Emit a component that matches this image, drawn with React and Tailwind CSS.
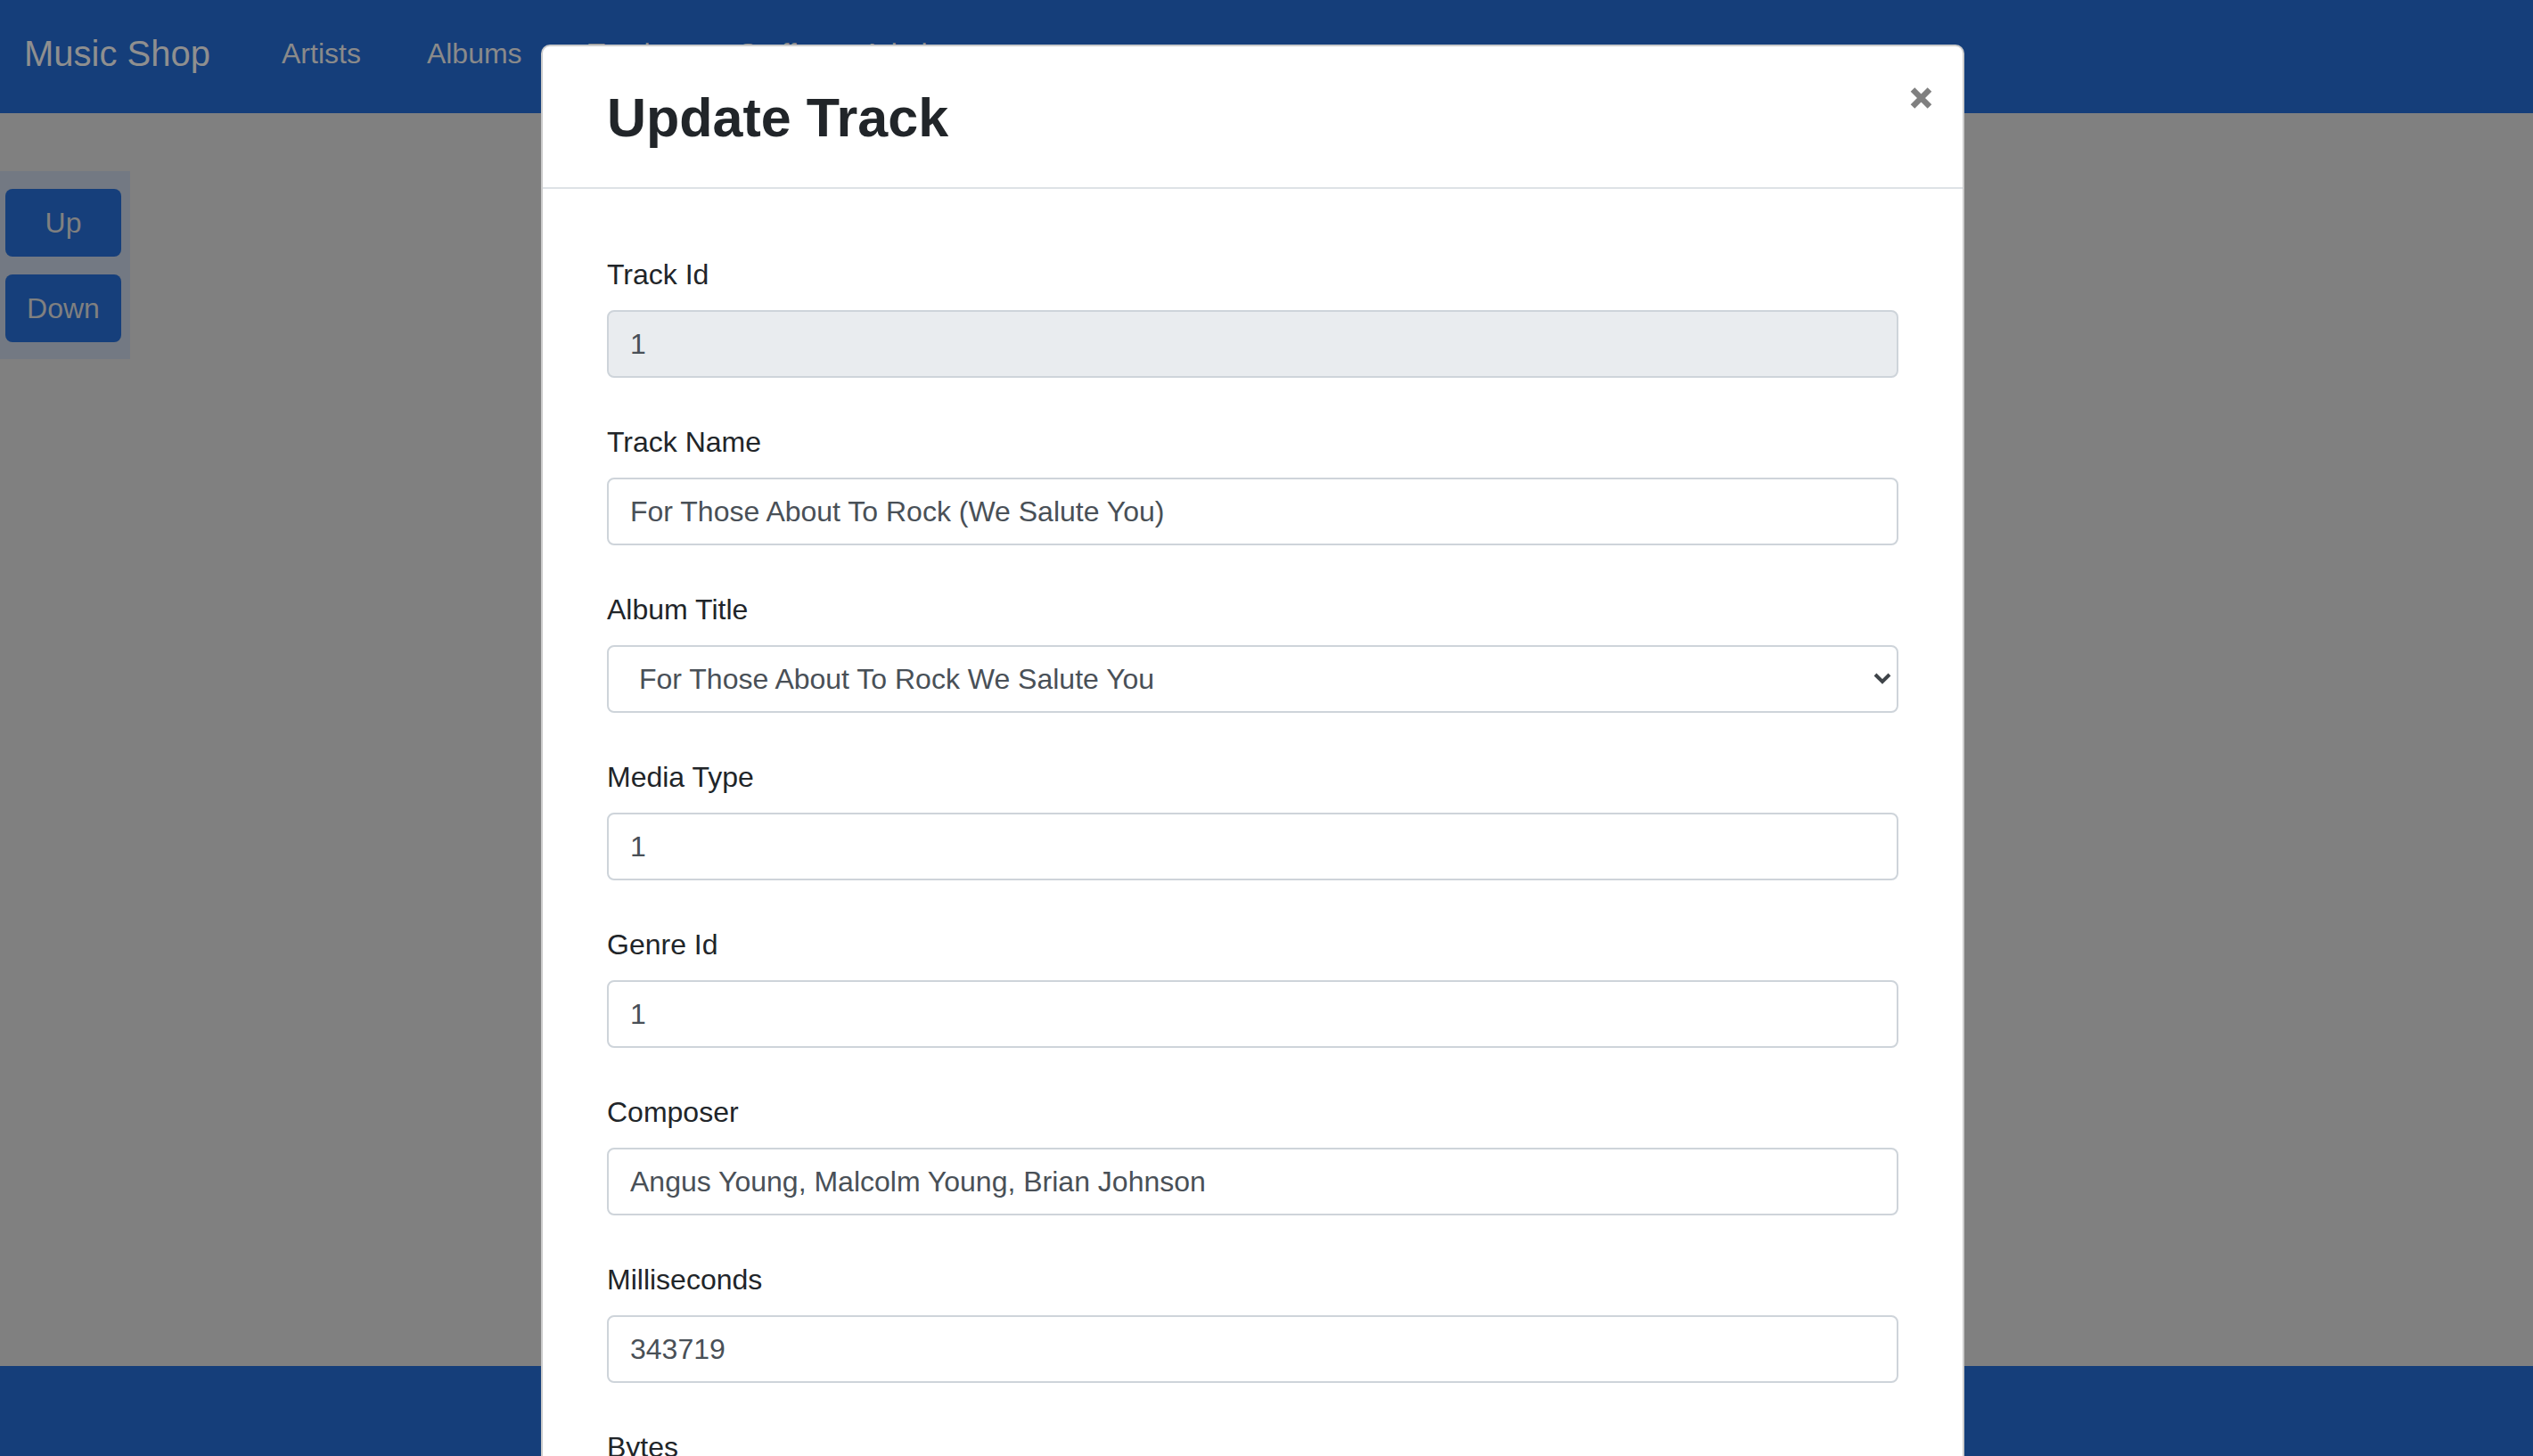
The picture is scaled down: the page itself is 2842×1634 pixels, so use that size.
import React from 'react'

const navLinks = ['Artists', 'Albums', 'Tracks', 'Staff', 'Admin']

const fields = [
    { label: 'Track Id', value: '1', disabled: true },
    { label: 'Track Name', value: 'For Those About To Rock (We Salute You)' },
    { label: 'Album Title', value: 'For Those About To Rock We Salute You', select: true },
    { label: 'Media Type', value: '1' },
    { label: 'Genre Id', value: '1' },
    { label: 'Composer', value: 'Angus Young, Malcolm Young, Brian Johnson' },
    { label: 'Milliseconds', value: '343719' },
    { label: 'Bytes', value: '11170334' },
    { label: 'Unit Price', value: '0.99' }
]

function Field({ field }) {
    const base =
        'block w-full h-[76px] border-2 border-[#ced4da] rounded-[8px] text-[32px] text-[#495057] outline-none'
    return (
        <div className="mb-[48px]">
            <label className="block mb-[16px] text-[32px] leading-[48px] text-[#212529]">
                {field.label}
            </label>
            {field.select ? (
                <div className="relative">
                    <select
                        defaultValue={field.value}
                        className={`${base} appearance-none bg-white pl-[34px] pr-[60px]`}
                    >
                        <option>{field.value}</option>
                    </select>
                    <svg
                        className="absolute right-[8px] top-[30px] w-[20px] h-[14px] pointer-events-none"
                        viewBox="0 0 20 14"
                        fill="none"
                        stroke="#3f4449"
                        strokeWidth="4"
                    >
                        <path d="M2 3l8 8 8-8" />
                    </svg>
                </div>
            ) : (
                <input
                    readOnly
                    disabled={field.disabled}
                    defaultValue={field.value}
                    className={`${base} px-[24px] ${field.disabled ? 'bg-[#e9ecef]' : 'bg-white'}`}
                />
            )}
        </div>
    )
}

export default function App() {
    return (
        <div
            className="relative h-[1634px] w-full overflow-hidden bg-[#808080]"
            style={{ fontFamily: '"Liberation Sans", Arial, sans-serif' }}
        >
            <div className="flex flex-col h-full">
                <nav className="h-[127px] shrink-0 bg-[#153e7a] flex items-center pl-[27px] pb-[8px]">
                    <span className="text-[40px] text-[#8f8f8f] mr-[80px]">Music Shop</span>
                    <div className="flex items-center gap-[74px]">
                        {navLinks.map(l => (
                            <span key={l} className="text-[32px] text-[#8a8a8a]">
                                {l}
                            </span>
                        ))}
                    </div>
                </nav>

                <main className="flex-1 pt-[65px]">
                    <div className="w-[146px] bg-[#737983] pt-[20px] pb-[19px] pl-[6px] pr-[10px] flex flex-col gap-[20px]">
                        <button className="h-[76px] rounded-[8px] bg-[#163f7b] text-[32px] text-[#808080]">
                            Up
                        </button>
                        <button className="h-[76px] rounded-[8px] bg-[#163f7b] text-[32px] text-[#808080]">
                            Down
                        </button>
                    </div>
                </main>

                <footer className="h-[101px] shrink-0 bg-[#153e7a]" />
            </div>

            <div className="absolute left-[607px] top-[50px] w-[1597px] bg-white border-2 border-black/20 rounded-[10px]">
                <div className="relative px-[72px] pt-[42px] pb-[39px] border-b-2 border-[#dee2e6]">
                    <h5 className="text-[61px] leading-[77px] font-bold text-[#212529]">Update Track</h5>
                    <button className="absolute right-[34px] top-[46px] w-[25px] h-[24px]">
                        <svg viewBox="0 0 25 24" className="w-[25px] h-[24px]" stroke="#808080" strokeWidth="6.5">
                            <path d="M3 2.5l19 19M22 2.5l-19 19" />
                        </svg>
                    </button>
                </div>
                <div className="px-[72px] pt-[72px] pb-[40px]">
                    {fields.map(f => (
                        <Field key={f.label} field={f} />
                    ))}
                </div>
            </div>
        </div>
    )
}
